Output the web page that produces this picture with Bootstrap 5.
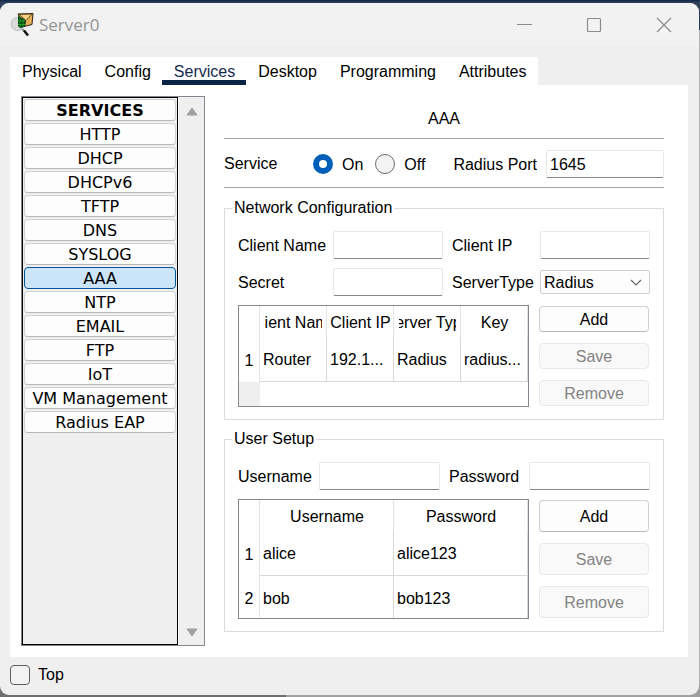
<!DOCTYPE html>
<html lang="en">
<head>
<meta charset="utf-8">
<meta name="viewport" content="width=device-width, initial-scale=1">
<title>Server0</title>
<link href="https://cdn.jsdelivr.net/npm/bootstrap@5.3.0/dist/css/bootstrap.min.css" rel="stylesheet">
<style>
  body {
    font: 16px/24px "Liberation Sans", Arial, sans-serif;
    color: #000;
    padding: 3px 1px 2px 0;
    background: linear-gradient(to right, #6e6e6e 286px, #a0a0a0 286px) bottom / 100% 12px no-repeat,
                linear-gradient(#0f2748 0, #33435f 3px, #1b2f50 30px, #b4b4b4 30px);
  }
  .app-window { background: #efefef; border-radius: 9px; overflow: hidden; padding-right: 11px; }
  .title-bar { background: #f2f2f2; height: 43px; margin-right: -11px; color: #949494; padding-left: 10px; }
  .title-text { font: 17px/24px "Open Sans", "Noto Sans", sans-serif; padding-left: 5px; }
  .win-btn { width: 70px; height: 41px; border: 0; background: none; padding: 0; }
  .tab-strip { background: #fff; margin: 11px 0 0 10px; }
  .tab-strip .nav-link { color: #000; padding: 2px 11px 0 12px; line-height: 26px; height: 28px; border-radius: 0; }
  .tab-strip .nav-link.active { color: #12294f; background: none; box-shadow: inset 0 -5px #0a2347; }
  .panel { background: #fff; margin-left: 10px; padding: 11px 24px 11px 11px; }
  .services { width: 184px; flex: none; border: 1px solid #828790; background: #efefef; }
  .service-list { border: 1px solid #000; padding: 1px; gap: 2px; }
  .service-btn {
    font: 16px/18px "DejaVu Sans", Verdana, sans-serif; height: 22px; padding: 2px 0 0;
    border: 1px solid #d0d0d0; border-bottom-color: #b6b6b6; border-radius: 4px; background: #fdfdfd;
    white-space: nowrap; color: #000;
  }
  .service-btn.heading { font-weight: bold; }
  .service-btn.current { background: #cce4f7; border-color: #00559b; }
  .scroll-rail { width: 26px; flex: none; padding: 10px 0 8px; border-left: 1px solid #fff; }
  .settings { margin-left: 19px; min-width: 0; }
  .rule { border-bottom: 1px solid #a0a0a0; }
  .page-title { font-size: 16px; line-height: 24px; padding: 11px 0 7px; margin: 0; }
  .service-row { height: 49px; margin-bottom: 11px; padding-top: 2px; }
  .service-name { width: 89px; }
  .service-row .form-check-input { width: 20px; height: 20px; margin: 0; border: 1px solid #6a6a6a; background: #f3f3f3; box-shadow: none; }
  .service-row .form-check-input:checked { background: #fff; border: 6px solid #005fb8; }
  .service-row label { padding-top: 1px; margin-left: 9px; }
  .service-row label + .form-check-input { margin-left: 12px; }
  .port-box { width: 118px; margin-left: 9px; }
  .line-edit {
    height: 28px; width: 100%; min-width: 0; padding: 1px 3px 0; border: 1px solid #e8e8e8;
    border-bottom-color: #868686; border-radius: 2px; background: #fff; color: #000; font-size: 16px;
  }
  .group { border: 1px solid #dcdcdc; padding: 14px 13px 12px; min-width: 0; }
  .group + .group { margin-top: 10px; }
  .group legend { float: none; width: auto; font-size: 16px; line-height: 18px; padding: 0 2px; margin: 0 0 0 -6px; }
  .net-grid { display: grid; grid-template-columns: 95px 1fr 97px 1fr; row-gap: 9px; align-items: center; }
  .user-grid { display: grid; grid-template-columns: 81px 1fr 89px 1fr; align-items: center; }
  .net-grid label, .user-grid label { padding-top: 1px; }
  .net-grid .second, .user-grid .second { padding-left: 9px; white-space: nowrap; }
  .area { margin-top: 9px; gap: 10px; }
  .combo {
    height: 24px; width: 100%; padding: 0 3px; border: 1px solid #d0d0d0; border-radius: 2px; appearance: none; color: #000;
    background: #fdfdfd url("data:image/svg+xml,%3Csvg xmlns='http://www.w3.org/2000/svg' width='12' height='7'%3E%3Cpath d='M1 1l5 5 5-5' fill='none' stroke='%23666' stroke-width='1.2'/%3E%3C/svg%3E") right 7px center no-repeat;
  }
  .grid-wrap { border: 1px solid #828790; min-width: 0; }
  .data-grid { width: 100%; table-layout: fixed; border-collapse: separate; border-spacing: 0; }
  .data-grid th { font-weight: normal; }
  .data-grid thead th { height: 31px; padding: 2px 4px 0 5px; border-right: 1px solid #e4e4e4; text-align: center; }
  .data-grid thead .snug { padding-left: 3px; padding-right: 2px; }
  .data-grid tbody th { text-align: center; border-right: 1px solid #e4e4e4; padding: 3px 0 0; }
  .data-grid tbody td { height: 45px; padding: 2px 3px 0; border-right: 1px solid #d8d8d8; border-bottom: 1px solid #d8d8d8; white-space: nowrap; }
  .data-grid tbody.last-flush tr:last-child > * { height: 42px; border-bottom: 0; padding-top: 4px; }
  .data-grid .spare td { height: 24px; border: 0; padding: 0; }
  .data-grid .spare td:first-child { background: #efefef; }
  .num-col { width: 21px; }
  .head-clip { display: flex; justify-content: center; overflow: hidden; white-space: nowrap; }
  .side-actions { width: 111px; flex: none; padding: 1px 1px 1px 0; }
  .push {
    height: 26px; padding: 1px 0 0; border: 1px solid #d0d0d0; border-bottom-color: #b8b8b8; border-radius: 4px;
    background: #fdfdfd; color: #000; font-size: 16px; line-height: 22px;
  }
  .push:disabled { color: #838383; background: #f9f9f9; border-color: #e8e8e8; }
  .tall .push { height: 32px; }
  .status { height: 38px; padding: 0 0 3px 10px; }
  .status .form-check-input { width: 20px; height: 20px; margin: 0; border: 1px solid #606060; border-radius: 4px; background-color: #f3f3f3; }
</style>
<script src="https://cdn.jsdelivr.net/npm/bootstrap@5.3.0/dist/js/bootstrap.bundle.min.js"></script>
</head>
<body class="min-vh-100 d-flex flex-column">
<div class="app-window flex-grow-1 d-flex flex-column">
  <header class="title-bar d-flex align-items-center">
    <svg width="24" height="24" viewBox="0 0 24 24" aria-hidden="true">
      <circle cx="7.500" cy="11" r="6.500" fill="#d9dcd9" stroke="#bdc1bd"/>
      <path d="M8 1l15-.5-1 11-8 2z" fill="#e2ae58" stroke="#2d2410" stroke-width="1"/>
      <path d="M9 1.500l7 6 6-6.500z" fill="#f6d083" stroke="#4a3918" stroke-width=".8"/>
      <path d="M8 3l6 3 2 2-1 6-5 1-2-2z" fill="#053f0d"/>
      <path d="M10 4v10M13 6v8M8 8h7M8 11.500h7" stroke="#1fa02a" stroke-width="1"/>
      <path d="M12 16l2 2" stroke="#888" stroke-width="2"/>
      <path d="M14 17.500l4 5" stroke="#111" stroke-width="2.500"/>
    </svg>
    <span class="title-text me-auto">Server0</span>
    <button class="win-btn" aria-label="Minimize"><svg width="16" height="16"><path d="M1 7.500h15" stroke="#8c8c8c"/></svg></button>
    <button class="win-btn" aria-label="Maximize"><svg width="16" height="16"><rect x="1.500" y="1.500" width="13" height="13" rx="1" fill="none" stroke="#8c8c8c" stroke-width="1.200"/></svg></button>
    <button class="win-btn" aria-label="Close"><svg width="16" height="16"><path d="M1 1l14 14M15 1L1 15" stroke="#8c8c8c" stroke-width="1.200"/></svg></button>
  </header>

  <nav class="tab-strip nav align-self-start">
    <a class="nav-link" href="#physical">Physical</a>
    <a class="nav-link" href="#config">Config</a>
    <a class="nav-link active" href="#services" aria-current="page">Services</a>
    <a class="nav-link" href="#desktop">Desktop</a>
    <a class="nav-link" href="#programming">Programming</a>
    <a class="nav-link" href="#attributes">Attributes</a>
  </nav>

  <main class="panel flex-grow-1 d-flex" id="services">
    <aside class="services d-flex">
      <div class="service-list flex-grow-1 d-flex flex-column">
        <button class="service-btn heading">SERVICES</button>
        <button class="service-btn">HTTP</button>
        <button class="service-btn">DHCP</button>
        <button class="service-btn">DHCPv6</button>
        <button class="service-btn">TFTP</button>
        <button class="service-btn">DNS</button>
        <button class="service-btn">SYSLOG</button>
        <button class="service-btn current">AAA</button>
        <button class="service-btn">NTP</button>
        <button class="service-btn">EMAIL</button>
        <button class="service-btn">FTP</button>
        <button class="service-btn">IoT</button>
        <button class="service-btn">VM Management</button>
        <button class="service-btn">Radius EAP</button>
      </div>
      <div class="scroll-rail d-flex flex-column justify-content-between align-items-center">
        <svg width="12" height="9"><path d="M6 1l5 7H1z" fill="#a0a0a0" stroke="#a0a0a0" stroke-linejoin="round"/></svg>
        <svg width="12" height="9"><path d="M6 8L1 1h10z" fill="#a0a0a0" stroke="#a0a0a0" stroke-linejoin="round"/></svg>
      </div>
    </aside>

    <section class="settings flex-grow-1">
      <h1 class="page-title rule text-center fw-normal">AAA</h1>
      <div class="service-row rule d-flex align-items-center">
        <span class="service-name">Service</span>
        <input class="form-check-input" type="radio" name="service" id="on" checked>
        <label for="on">On</label>
        <input class="form-check-input" type="radio" name="service" id="off">
        <label for="off">Off</label>
        <label class="ms-auto" for="port">Radius Port</label>
        <div class="port-box"><input class="line-edit" id="port" value="1645"></div>
      </div>

      <fieldset class="group">
        <legend>Network Configuration</legend>
        <div class="net-grid">
          <label for="cname">Client Name</label>
          <input class="line-edit" id="cname">
          <label class="second" for="cip">Client IP</label>
          <input class="line-edit" id="cip">
          <label for="secret">Secret</label>
          <input class="line-edit" id="secret">
          <label class="second" for="stype">ServerType</label>
          <select class="combo" id="stype"><option>Radius</option><option>Tacacs</option></select>
        </div>
        <div class="area d-flex">
          <div class="grid-wrap flex-grow-1">
            <table class="data-grid">
              <colgroup><col class="num-col"><col><col><col><col></colgroup>
              <thead>
                <tr><th></th><th><span class="head-clip">Client Name</span></th><th class="snug">Client&nbsp;IP</th><th><span class="head-clip">Server Type</span></th><th>Key</th></tr>
              </thead>
              <tbody>
                <tr><th>1</th><td>Router</td><td>192.1...</td><td>Radius</td><td>radius...</td></tr>
                <tr class="spare"><td></td><td colspan="4"></td></tr>
              </tbody>
            </table>
          </div>
          <div class="side-actions d-flex flex-column justify-content-between">
            <button class="push">Add</button>
            <button class="push" disabled>Save</button>
            <button class="push" disabled>Remove</button>
          </div>
        </div>
      </fieldset>

      <fieldset class="group">
        <legend>User Setup</legend>
        <div class="user-grid">
          <label for="uname">Username</label>
          <input class="line-edit" id="uname">
          <label class="second" for="pass">Password</label>
          <input class="line-edit" id="pass">
        </div>
        <div class="area d-flex">
          <div class="grid-wrap flex-grow-1">
            <table class="data-grid">
              <colgroup><col class="num-col"><col><col></colgroup>
              <thead>
                <tr><th></th><th>Username</th><th>Password</th></tr>
              </thead>
              <tbody class="last-flush">
                <tr><th>1</th><td>alice</td><td>alice123</td></tr>
                <tr><th>2</th><td>bob</td><td>bob123</td></tr>
              </tbody>
            </table>
          </div>
          <div class="side-actions tall d-flex flex-column justify-content-between">
            <button class="push">Add</button>
            <button class="push" disabled>Save</button>
            <button class="push" disabled>Remove</button>
          </div>
        </div>
      </fieldset>
    </section>
  </main>

  <footer class="status d-flex align-items-center">
    <input class="form-check-input" type="checkbox" id="top">
    <label class="ms-2" for="top">Top</label>
  </footer>
</div>
</body>
</html>
